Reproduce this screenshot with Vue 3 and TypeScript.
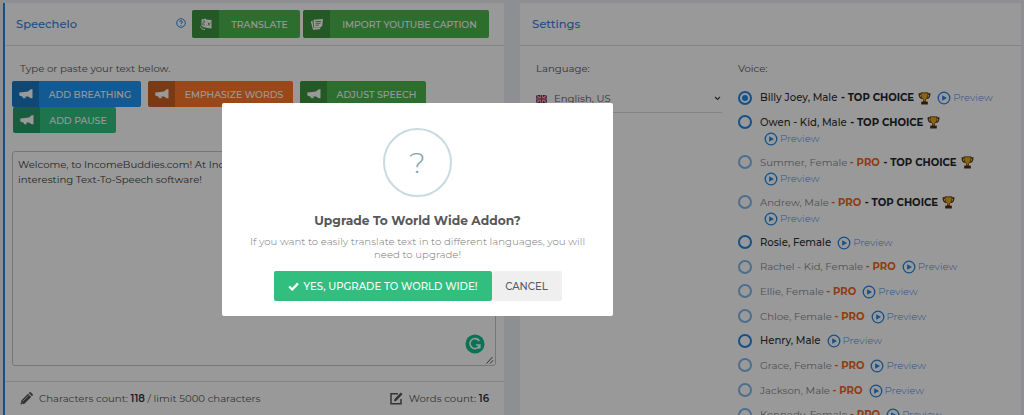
<!-- Speechelo editor with the upgrade dialog open -->
<template>
  <div class="page">
    <section class="card editor">
      <header class="card-head">
        <h3 class="title">Speechelo</h3>
        <svg class="help" viewBox="0 0 10 10">
          <circle cx="5" cy="5" r="4.300" />
          <path d="M3.700 4c0-1.800 2.700-1.700 2.700 0C6.400 5 5 4.900 5 6M5 7v.8" />
        </svg>
        <button class="btn green head-btn translate">
          <span class="btn-icon">
            <svg width="14" height="14" viewBox="0 0 14 14">
              <path class="fill" d="M6.500 2.500L12.500 3v8.500L8 11z" />
              <path class="fill" d="M2.500 2.500l4.500-1 1 9.500-4-1-1.500-1.500z" />
              <path class="cut" d="M3.500 4.500c2-1.500 3 0 2 1s-2 0-2 1.500 2 1 2.500.5M9 5.500l1.500 3M11.500 5.500l-2.500 3" />
              <path class="line" d="M1.500 9.500c.5 2 2 3 4.500 3" />
            </svg>
          </span>
          <span class="btn-text">TRANSLATE</span>
        </button>
        <button class="btn green head-btn import">
          <span class="btn-icon">
            <svg width="14" height="14" viewBox="0 0 14 14">
              <path class="fill" d="M.8 4.500l1.700-.7.8 6.700 7 .8-.3 1L3 12.800z" />
              <path class="fill" d="M3.500 2.800l9.500-.8-.8 7-2.200 1.800-6-.3z" />
              <path class="cut" d="M5.500 4.500h5.500M5.500 6.300h5M5.500 8.100h3.500" />
            </svg>
          </span>
          <span class="btn-text">IMPORT YOUTUBE CAPTION</span>
        </button>
      </header>

      <div class="editor-body">
        <p class="hint">Type or paste your text below.</p>
        <div class="tools">
          <button
            v-for="tool in tools"
            :key="tool.label"
            class="btn"
            :class="[tool.color, tool.name]"
          >
            <span class="btn-icon">
              <svg width="14" height="10" viewBox="0 0 14 10">
                <path class="fill" d="M13.500.3v9h-1.800L9 7.600H3L.3 6.500v-3L3 3.200l6-.7L11.700.3zM3.500 7.500h2.800l.4 1.800H4.200z" />
              </svg>
            </span>
            <span class="btn-text">{{ tool.label }}</span>
          </button>
        </div>
        <div class="text-box">
          <div>Welcome, to IncomeBuddies.com! At IncomeBuddies</div>
          <div>interesting Text-To-Speech software!</div>
          <svg class="grammar" viewBox="0 0 20 20">
            <circle cx="10" cy="10" r="9.500" />
            <path d="M14.300 7A5 5 0 1 0 14.800 11H11M14.800 11v3.500" />
          </svg>
          <svg class="grip" viewBox="0 0 8 8">
            <path d="M.5 7.500l6-6.500M4 7.500l3-3.200" />
          </svg>
        </div>
      </div>

      <footer class="counts">
        <svg class="pencil" viewBox="0 0 13 13">
          <path d="M.5 12.500l.8-4L8 1.800l3.200 3.200-6.700 6.700zM8.700 1.100l.8-.8q.6-.5 1.200 0l2 2q.5.600 0 1.200l-.8.800z" />
          <path class="hole" d="M2.500 9.500l6-6M1.500 10.500l1 1" />
        </svg>
        <span class="chars">Characters count: <b>118</b> / limit 5000 characters</span>
        <svg class="edit" viewBox="0 0 13 13">
          <path d="M8 1.800H1v10h10V7" />
          <path class="pen" d="M4 9.500l.5-2.500L10.800.6l1.700 1.700L6.300 8.800z" />
        </svg>
        <span class="words">Words count: <b>16</b></span>
      </footer>
    </section>

    <section class="card settings">
      <header class="card-head">
        <h3 class="title">Settings</h3>
      </header>
      <div class="settings-body">
        <div class="language">
          <p class="label">Language:</p>
          <div class="select">
            <svg class="flag" viewBox="0 0 11 8">
              <rect width="11" height="8" rx="1" fill="#27377f" />
              <path d="M0 0l11 8M11 0L0 8" stroke="#fff" stroke-width="1.300" />
              <path d="M0 0l11 8M11 0L0 8" stroke="#e0354d" stroke-width=".7" />
              <path d="M5.500 0v8M0 4h11" stroke="#fff" stroke-width="2.400" />
              <path d="M5.500 0v8M0 4h11" stroke="#e0203c" stroke-width="1.600" />
            </svg>
            <span class="lang-name">English, US</span>
            <svg class="chevron" viewBox="0 0 7 5">
              <path d="M1 1l2.500 2.500L6 1" />
            </svg>
          </div>
        </div>
        <div class="voices">
          <p class="label voice-label">Voice:</p>
          <div
            v-for="voice in voices"
            :key="voice.name"
            class="voice"
            :class="{ locked: voice.pro, free: !voice.pro, checked: voice.checked, tall: voice.wrap, top: voice.top }"
          >
            <span class="radio" />
            <div class="voice-text">
              <div class="voice-line">
                <span class="name">{{ voice.name }}</span>
                <span
                  v-if="voice.pro"
                  class="pro"
                >- PRO</span>
                <template v-if="voice.top">
                  <span class="choice">- TOP CHOICE</span>
                  <svg class="trophy" viewBox="0 0 13 13">
                    <path class="handles" d="M3.500 2H1.200c0 3 1 4.300 3.300 4.300M9.500 2h2.300c0 3-1 4.300-3.300 4.300" />
                    <path class="cup" d="M3 .8h7c0 4-.8 6-2.500 6.800v2h-2v-2C3.800 6.800 3 4.800 3 .8z" />
                    <path class="base" d="M3.200 9.600h6.600v2.900H3.200z" />
                  </svg>
                </template>
                <a
                  v-if="!voice.wrap"
                  class="preview"
                >
                  <svg viewBox="0 0 14 14">
                    <circle cx="7" cy="7" r="5.800" />
                    <path d="M5.200 4.200v5.600L10 7z" />
                  </svg>
                  <span>Preview</span>
                </a>
              </div>
              <div
                v-if="voice.wrap"
                class="voice-line second"
              >
                <a class="preview">
                  <svg viewBox="0 0 14 14">
                    <circle cx="7" cy="7" r="5.800" />
                    <path d="M5.200 4.200v5.600L10 7z" />
                  </svg>
                  <span>Preview</span>
                </a>
              </div>
            </div>
          </div>
        </div>
      </div>
    </section>

    <div class="backdrop">
      <div class="dialog">
        <div class="mark">?</div>
        <h2 class="dialog-title">Upgrade To World Wide Addon?</h2>
        <p class="dialog-text">
          If you want to easily translate text in to different languages, you will<br>
          need to upgrade!
        </p>
        <div class="actions">
          <button class="confirm">
            <svg viewBox="0 0 11 9">
              <path d="M1.200 4.500l3 3L10 1.400" />
            </svg>
            <span>YES, UPGRADE TO WORLD WIDE!</span>
          </button>
          <button class="cancel">CANCEL</button>
        </div>
      </div>
    </div>
  </div>
</template>

<script setup lang="ts">
  interface Tool {
    name: string
    label: string
    color: string
  }

  interface Voice {
    name: string
    pro?: boolean
    top?: boolean
    checked?: boolean
    wrap?: boolean
  }

  const tools: Tool[] = [
    { name: 'breathing', label: 'ADD BREATHING', color: 'blue' },
    { name: 'emphasize', label: 'EMPHASIZE WORDS', color: 'orange' },
    { name: 'adjust', label: 'ADJUST SPEECH', color: 'green' },
    { name: 'pause', label: 'ADD PAUSE', color: 'teal' },
  ]

  // wrap: the preview link drops to a second line
  const voices: Voice[] = [
    { name: 'Billy Joey, Male', top: true, checked: true },
    { name: 'Owen - Kid, Male', top: true, wrap: true },
    { name: 'Summer, Female', pro: true, top: true, wrap: true },
    { name: 'Andrew, Male', pro: true, top: true, wrap: true },
    { name: 'Rosie, Female' },
    { name: 'Rachel - Kid, Female', pro: true },
    { name: 'Ellie, Female', pro: true },
    { name: 'Chloe, Female', pro: true },
    { name: 'Henry, Male' },
    { name: 'Grace, Female', pro: true },
    { name: 'Jackson, Male', pro: true },
    { name: 'Kennedy, Female', pro: true },
  ]
</script>

<style>
  body {
    margin: 0;
    overflow: hidden;
  }
</style>

<style scoped>
  .page {
    position: relative;
    display: flex;
    gap: 16px;
    box-sizing: border-box;
    width: 1024px;
    height: 415px;
    padding: 3px 3px 0;
    overflow: hidden;
    background: #eceef6;
    font-family: Montserrat, Inter, sans-serif;
    font-size: 10.15px;
    color: #575962;
  }

  * {
    box-sizing: border-box;
  }

  h2,
  h3,
  p {
    margin: 0;
  }

  button {
    border: 0;
    padding: 0;
    font-family: inherit;
  }

  svg {
    display: block;
    flex: none;
    fill: none;
  }

  .card {
    height: 412px;
    background: #fff;
    white-space: nowrap;
  }

  .editor {
    display: flex;
    flex-direction: column;
    width: 501px;
    border-left: 2px solid #2787dc;
  }

  .settings {
    width: 501px;
  }

  .card-head {
    display: flex;
    align-items: center;
    height: 43px;
    padding-left: 11px;
    border-bottom: 1px solid #dcdde5;
  }

  .settings .card-head {
    padding-left: 12px;
  }

  .title {
    font-size: 11.5px;
    font-weight: 500;
    color: #2f86e0;
  }

  .editor .title {
    width: 160px;
  }

  .help {
    width: 10px;
    height: 10px;
    margin-right: 6px;
    margin-top: -3px;
    stroke: #2f86e0;
  }

  .btn {
    display: flex;
    height: 26px;
    overflow: hidden;
    border-radius: 2px;
    color: #fff;
    font-size: 9.4px;
    font-weight: 500;
  }

  .head-btn {
    height: 28px;
    margin-right: 3px;
  }

  .btn-icon {
    display: flex;
    align-items: center;
    justify-content: center;
    width: 27px;
    height: 100%;
    background: rgba(0, 0, 0, 0.2);
  }

  .btn-text {
    flex: 1;
    align-self: center;
    text-align: center;
  }

  .fill {
    fill: #fff;
  }

  .cut {
    stroke: #388e3c;
    stroke-width: 0.8;
  }

  .line {
    stroke: #fff;
  }

  .green {
    background: #4bb84f;
  }

  .blue {
    background: #2196f3;
  }

  .orange {
    background: #ff7b2b;
  }

  .teal {
    background: #33c481;
  }

  .translate {
    width: 108px;
  }

  .import {
    width: 186px;
  }

  .editor-body {
    height: 335px;
    padding: 15px 8px 0 7px;
  }

  .hint {
    height: 20px;
    padding-left: 8px;
    line-height: 16px;
  }

  .tools {
    display: flex;
    flex-wrap: wrap;
    column-gap: 7px;
  }

  .breathing {
    width: 129px;
  }

  .emphasize {
    width: 145px;
  }

  .adjust {
    width: 126px;
    margin-right: 60px;
  }

  .pause {
    width: 103px;
    margin-left: 1px;
  }

  .text-box {
    position: relative;
    height: 215px;
    margin-top: 18px;
    padding: 5px;
    border: 1px solid #c3c5cf;
    border-radius: 3px;
    overflow: hidden;
    color: #3c3e46;
    line-height: 15px;
  }

  .grammar {
    position: absolute;
    right: 10px;
    bottom: 11px;
    width: 20px;
    height: 20px;
  }

  .grammar circle {
    fill: #12c08c;
  }

  .grammar path {
    stroke: #fff;
    stroke-width: 1.6;
  }

  .grip {
    position: absolute;
    right: 1px;
    bottom: 1px;
    width: 8px;
    height: 8px;
    stroke: #555;
  }

  .counts {
    display: flex;
    align-items: center;
    height: 34px;
    padding: 0 15px;
    border-top: 1px solid #dcdde5;
  }

  .counts b {
    font-weight: 600;
    color: #33353d;
  }

  .pencil {
    width: 13px;
    height: 13px;
    margin-right: 6px;
    fill: #55565c;
  }

  .hole {
    stroke: #fff;
    stroke-width: 0.6;
  }

  .chars {
    flex: 1;
  }

  .edit {
    width: 13px;
    height: 13px;
    margin-right: 6px;
    stroke: #55565c;
    stroke-width: 1.5;
  }

  .pen {
    fill: #55565c;
    stroke: none;
  }

  .settings-body {
    display: flex;
    padding: 15px 0 0 16px;
  }

  .language {
    width: 186px;
    margin-right: 16px;
  }

  .label {
    height: 24px;
    line-height: 16px;
  }

  .voice-label {
    height: 25px;
  }

  .select {
    display: flex;
    align-items: center;
    height: 28px;
    padding-right: 1px;
    border-bottom: 1px solid #d9dae3;
  }

  .flag {
    width: 11px;
    height: 8px;
    margin-right: 7px;
  }

  .lang-name {
    flex: 1;
  }

  .chevron {
    width: 7px;
    height: 5px;
    stroke: #444;
    stroke-width: 1.2;
  }

  .voice {
    display: flex;
    height: 24.67px;
    line-height: 24px;
    color: #85878f;
  }

  .voice.tall {
    height: 40px;
  }

  .voice.free {
    color: #2e3037;
    font-weight: 500;
  }

  .radio {
    flex: none;
    width: 14px;
    height: 14px;
    margin: 4.5px 8px 0 0;
    border: 2px solid #2586e2;
    border-radius: 50%;
  }

  .locked .radio {
    border-color: #7fb8ee;
  }

  .checked .radio {
    padding: 2px;
    background: #2586e2 content-box;
  }

  .voice-line {
    display: flex;
    align-items: center;
    height: 24px;
  }

  .voice-line.second {
    height: 16px;
    margin-top: -4px;
  }

  .pro {
    margin-left: 2.5px;
    color: #f26522;
    font-weight: 700;
  }

  .choice {
    margin-left: 3.5px;
    color: #25262c;
    font-weight: 700;
  }

  .trophy {
    width: 13px;
    height: 13px;
    margin-left: 4px;
  }

  .handles {
    stroke: #5c3a10;
    stroke-width: 1.3;
  }

  .cup {
    fill: #e6a817;
    stroke: #5c3a10;
    stroke-width: 0.8;
  }

  .base {
    fill: #4c2c0c;
  }

  .preview {
    display: flex;
    align-items: center;
    gap: 2px;
    margin-left: 6px;
    color: #4f8cea;
    font-weight: 300;
  }

  .second .preview {
    margin-left: 4px;
  }

  .preview svg {
    width: 14px;
    height: 14px;
  }

  .preview circle {
    stroke: #2586e2;
    stroke-width: 1.3;
  }

  .preview path {
    fill: #2586e2;
  }

  .backdrop {
    position: absolute;
    inset: 0;
    padding: 103px 0 0 222px;
    background: rgba(0, 0, 0, 0.4);
  }

  .dialog {
    display: flex;
    flex-direction: column;
    align-items: center;
    width: 391px;
    height: 213px;
    padding-top: 25px;
    border-radius: 2px;
    background: #fff;
  }

  .mark {
    width: 69px;
    height: 69px;
    border: 2.5px solid #c9dae1;
    border-radius: 50%;
    color: #7fa3b3;
    font-size: 29px;
    font-weight: 300;
    line-height: 65px;
    text-align: center;
  }

  .dialog-title {
    margin-top: 13px;
    color: #575757;
    font-size: 12.25px;
    font-weight: 700;
    line-height: 22px;
  }

  .dialog-text {
    margin-top: 4px;
    color: #777;
    font-size: 10.2px;
    font-weight: 300;
    line-height: 12.5px;
    text-align: center;
    white-space: nowrap;
  }

  .actions {
    display: flex;
    margin-top: 10px;
  }

  .confirm {
    display: flex;
    align-items: center;
    justify-content: center;
    gap: 5px;
    width: 218px;
    height: 30px;
    border-radius: 2px;
    background: #31be7f;
    color: #fff;
    font-size: 10.15px;
    font-weight: 500;
  }

  .confirm svg {
    width: 11px;
    height: 9px;
    stroke: #fff;
    stroke-width: 2.3;
  }

  .cancel {
    width: 70px;
    height: 30px;
    border-radius: 2px;
    background: #efefef;
    color: #575962;
    font-size: 10.15px;
    font-weight: 500;
  }
</style>
